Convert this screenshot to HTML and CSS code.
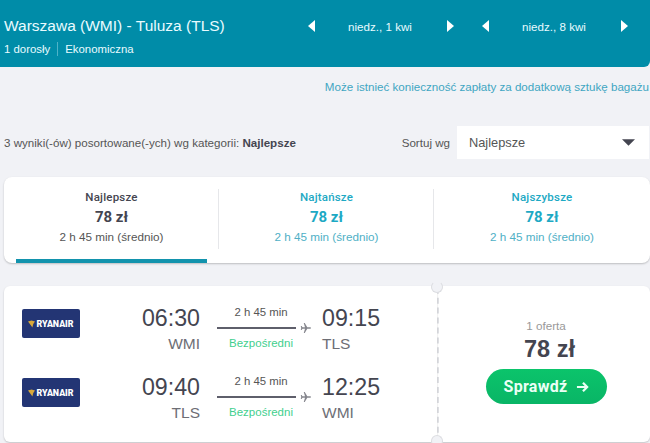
FILE: index.html
```html
<!DOCTYPE html>
<html lang="pl">
<head>
<meta charset="utf-8">
<title>Warszawa - Tuluza</title>
<link rel="stylesheet" href="styles.css">
</head>
<body>
<header class="header">
  <div class="route">
    <div class="route-title">Warszawa (WMI) - Tuluza (TLS)</div>
    <div class="route-meta"><span class="pax">1 dorosły</span><span class="cabin">Ekonomiczna</span></div>
  </div>
  <div class="dates">
    <div class="date">
      <svg class="tri" viewBox="0 0 7 12"><path d="M7 0V12L0 6Z"/></svg>
      <span>niedz., 1 kwi</span>
      <svg class="tri" viewBox="0 0 7 12"><path d="M0 0V12L7 6Z"/></svg>
    </div>
    <div class="date">
      <svg class="tri" viewBox="0 0 7 12"><path d="M7 0V12L0 6Z"/></svg>
      <span>niedz., 8 kwi</span>
      <svg class="tri" viewBox="0 0 7 12"><path d="M0 0V12L7 6Z"/></svg>
    </div>
  </div>
</header>
<p class="bag-note">Może istnieć konieczność zapłaty za dodatkową sztukę bagażu</p>
<div class="sort-row">
  <div class="results">3 wyniki(-ów) posortowane(-ych) wg kategorii: <b>Najlepsze</b></div>
  <div class="sort">
    <span class="sort-label">Sortuj wg</span>
    <div class="select"><span>Najlepsze</span><svg class="caret" viewBox="0 0 14 7"><path d="M0 0H14L7 7Z"/></svg></div>
  </div>
</div>
<section class="tabs">
  <div class="tab active">
    <div class="tab-name">Najlepsze</div><div class="tab-price">78 zł</div><div class="tab-time">2 h 45 min (średnio)</div>
  </div>
  <div class="tab">
    <div class="tab-name">Najtańsze</div><div class="tab-price">78 zł</div><div class="tab-time">2 h 45 min (średnio)</div>
  </div>
  <div class="tab">
    <div class="tab-name">Najszybsze</div><div class="tab-price">78 zł</div><div class="tab-time">2 h 45 min (średnio)</div>
  </div>
</section>
<section class="ticket">
  <div class="legs">
    <div class="leg">
      <div class="logo"><svg class="harp" viewBox="0 0 8 8"><path d="M0 1 4 0 8 1 6 4 5 8 3 5Z"/></svg><span>RYANAIR</span></div>
      <div class="stop stop-dep"><div class="time">06:30</div><div class="code">WMI</div></div>
      <div class="path">
        <div class="dur">2 h 45 min</div>
        <div class="track"><i class="line"></i><svg class="plane" viewBox="0 0 24 24"><path d="M22 12c0-1-1-1.700-2-1.700h-5.500L9.500 2H7.500l2.500 8.300H5L3.200 8H1.500l1 4-1 4h1.700L5 13.700h5L7.500 22h2l5-8.300H20c1 0 2-.7 2-1.700Z"/></svg></div>
        <div class="direct">Bezpośredni</div>
      </div>
      <div class="stop"><div class="time">09:15</div><div class="code">TLS</div></div>
    </div>
    <div class="leg">
      <div class="logo"><svg class="harp" viewBox="0 0 8 8"><path d="M0 1 4 0 8 1 6 4 5 8 3 5Z"/></svg><span>RYANAIR</span></div>
      <div class="stop stop-dep"><div class="time">09:40</div><div class="code">TLS</div></div>
      <div class="path">
        <div class="dur">2 h 45 min</div>
        <div class="track"><i class="line"></i><svg class="plane" viewBox="0 0 24 24"><path d="M22 12c0-1-1-1.700-2-1.700h-5.500L9.500 2H7.500l2.500 8.300H5L3.200 8H1.500l1 4-1 4h1.700L5 13.700h5L7.500 22h2l5-8.300H20c1 0 2-.7 2-1.700Z"/></svg></div>
        <div class="direct">Bezpośredni</div>
      </div>
      <div class="stop"><div class="time">12:25</div><div class="code">WMI</div></div>
    </div>
  </div>
  <div class="offer">
    <div class="offer-count">1 oferta</div>
    <div class="offer-price">78 zł</div>
    <button class="check">Sprawdź <svg class="arrow" viewBox="0 0 14 12"><path d="M1 6H12M7.500 1.500 12 6 7.500 10.500"/></svg></button>
  </div>
</section>
</body>
</html>
```
FILE: styles.css
```css
* { box-sizing: border-box; }
html, body { margin: 0; height: 443px; overflow: hidden; }
body { background: #f1f2f6; font-family: "Liberation Sans", Arial, sans-serif; color: #444550; width: 650px; }

.header { height: 67px; background: #008ca8; color: #e9fbff; border-bottom-right-radius: 6px; display: flex; justify-content: space-between; padding: 0 0 0 4px; }
.route-title { font-size: 15.500px; line-height: 20px; margin-top: 16px; }
.route-meta { font-size: 11.400px; line-height: 14px; margin-top: 6px; display: flex; }
.pax { padding-right: 7px; border-right: 1px solid #4fb3c8; margin-right: 7px; }
.dates { display: flex; gap: 28px; margin-top: 19px; height: 14px; margin-right: 22px; }
.date { width: 146px; display: flex; justify-content: space-between; align-items: center; font-size: 11.600px; }
.date span { margin-right: 2px; }
.tri { width: 7px; height: 12px; fill: #fff; flex: none; }

.bag-note { margin: 13px 1px 0 0; text-align: right; font-size: 11.600px; line-height: 14px; color: #3fa6c2; white-space: nowrap; }

.sort-row { display: flex; justify-content: space-between; align-items: center; height: 33px; margin-top: 32px; padding: 0 1px 0 4px; }
.results { font-size: 11.600px; color: #555; }
.results b { color: #444550; }
.sort { display: flex; align-items: center; }
.sort-label { font-size: 11.600px; color: #555; margin-right: 7px; }
.select { width: 192px; height: 33px; background: #fff; display: flex; justify-content: space-between; align-items: center; padding: 0 14px 0 12px; font-size: 12.800px; color: #555; }
.caret { width: 13px; height: 7px; fill: #444550; }

.tabs { margin: 18px 0 0 4px; height: 86px; background: #fff; border-radius: 8px; box-shadow: 0 1px 2px rgba(0,0,0,.22); display: grid; grid-template-columns: 215px 215px 1fr; overflow: hidden; }
.tab { position: relative; text-align: center; padding-top: 13px; color: #1da9c4; }
.tab + .tab::before { content: ""; position: absolute; left: -1px; top: 12px; height: 60px; border-left: 1px solid #e6e7ea; }
.tab-name { font-family: Roboto, sans-serif; font-weight: 500; font-size: 11.500px; line-height: 14px; letter-spacing: .2px; }
.tab-price { font-family: Roboto, sans-serif; font-weight: 700; font-size: 15px; line-height: 18px; margin-top: 4px; }
.tab-time { font-size: 11.700px; line-height: 14px; margin-top: 4px; color: #4fb0c6; }
.tab.active { color: #444550; }
.tab.active .tab-time { color: #555; }
.tab.active::after { content: ""; position: absolute; left: 12px; bottom: 0; width: 191px; height: 4px; background: #1293ad; }

.ticket { margin: 23px 0 0 4px; height: 156px; display: flex; }
.legs { width: 433px; background: #fff; border-radius: 6px; box-shadow: 0 1px 2px rgba(0,0,0,.2); padding: 16px 0 0 18px; position: relative; }
.legs::before, .legs::after { content: ""; position: absolute; right: -6px; width: 10px; height: 10px; border-radius: 50%; background: #f1f2f6; border: 1px solid #dcdde1; z-index: 1; }
.legs::before { top: -5px; border-top-color: #f1f2f6; }
.legs::after { bottom: -5px; border-bottom-color: #f1f2f6; }
.leg { display: flex; height: 69px; }
.logo { width: 58px; height: 29px; margin-top: 7px; background: #233574; border-radius: 2px; display: flex; align-items: center; justify-content: center; color: #fff; font-family: Roboto, sans-serif; font-weight: 900; font-size: 8.800px; }
.harp { width: 7px; height: 8px; fill: #d9a93a; margin-right: 1px; flex: none; }
.stop { width: 60px; }
.stop-dep { width: 120px; text-align: right; }
.time { font-size: 23.200px; line-height: 28px; color: #444550; margin-top: 2px; }
.code { font-size: 15.500px; line-height: 18px; color: #6d6e75; margin-top: 3px; }
.path { width: 105px; margin: 0 0 0 17px; font-size: 11.400px; }
.dur { width: 88px; text-align: center; line-height: 13px; margin-top: 4px; color: #555; }
.track { display: flex; align-items: center; height: 14px; margin-top: 2px; }
.line { display: block; width: 79px; height: 2px; background: #5e5f6b; }
.plane { width: 12px; height: 12px; fill: #85868d; margin-left: 4px; }
.direct { width: 88px; text-align: center; color: #3fcf8e; line-height: 14px; margin-top: 1px; font-size: 11.500px; }

.offer { flex: 1; background: #fff; border-radius: 6px; box-shadow: 0 1px 2px rgba(0,0,0,.2); border-left: 2px dashed #e0e1e5; display: flex; flex-direction: column; align-items: center; padding: 33px 0 0 3px; }
.offer-count { font-size: 11.700px; line-height: 14px; color: #999; }
.offer-price { font-family: "Liberation Sans", sans-serif; font-weight: 700; font-size: 23.500px; line-height: 26px; margin: 3px 0 0 7px; color: #444550; }
.check { margin-top: 7px; width: 121px; height: 35px; border: 0; border-radius: 18px; background: linear-gradient(#0bc46b, #09b566); color: #eafff5; font-family: Roboto, sans-serif; font-weight: 700; font-size: 16px; letter-spacing: .3px; padding: 0; display: flex; align-items: center; justify-content: center; gap: 8px; }
.arrow { width: 13px; height: 12px; fill: none; stroke: #eafff5; stroke-width: 2.400; }
```
